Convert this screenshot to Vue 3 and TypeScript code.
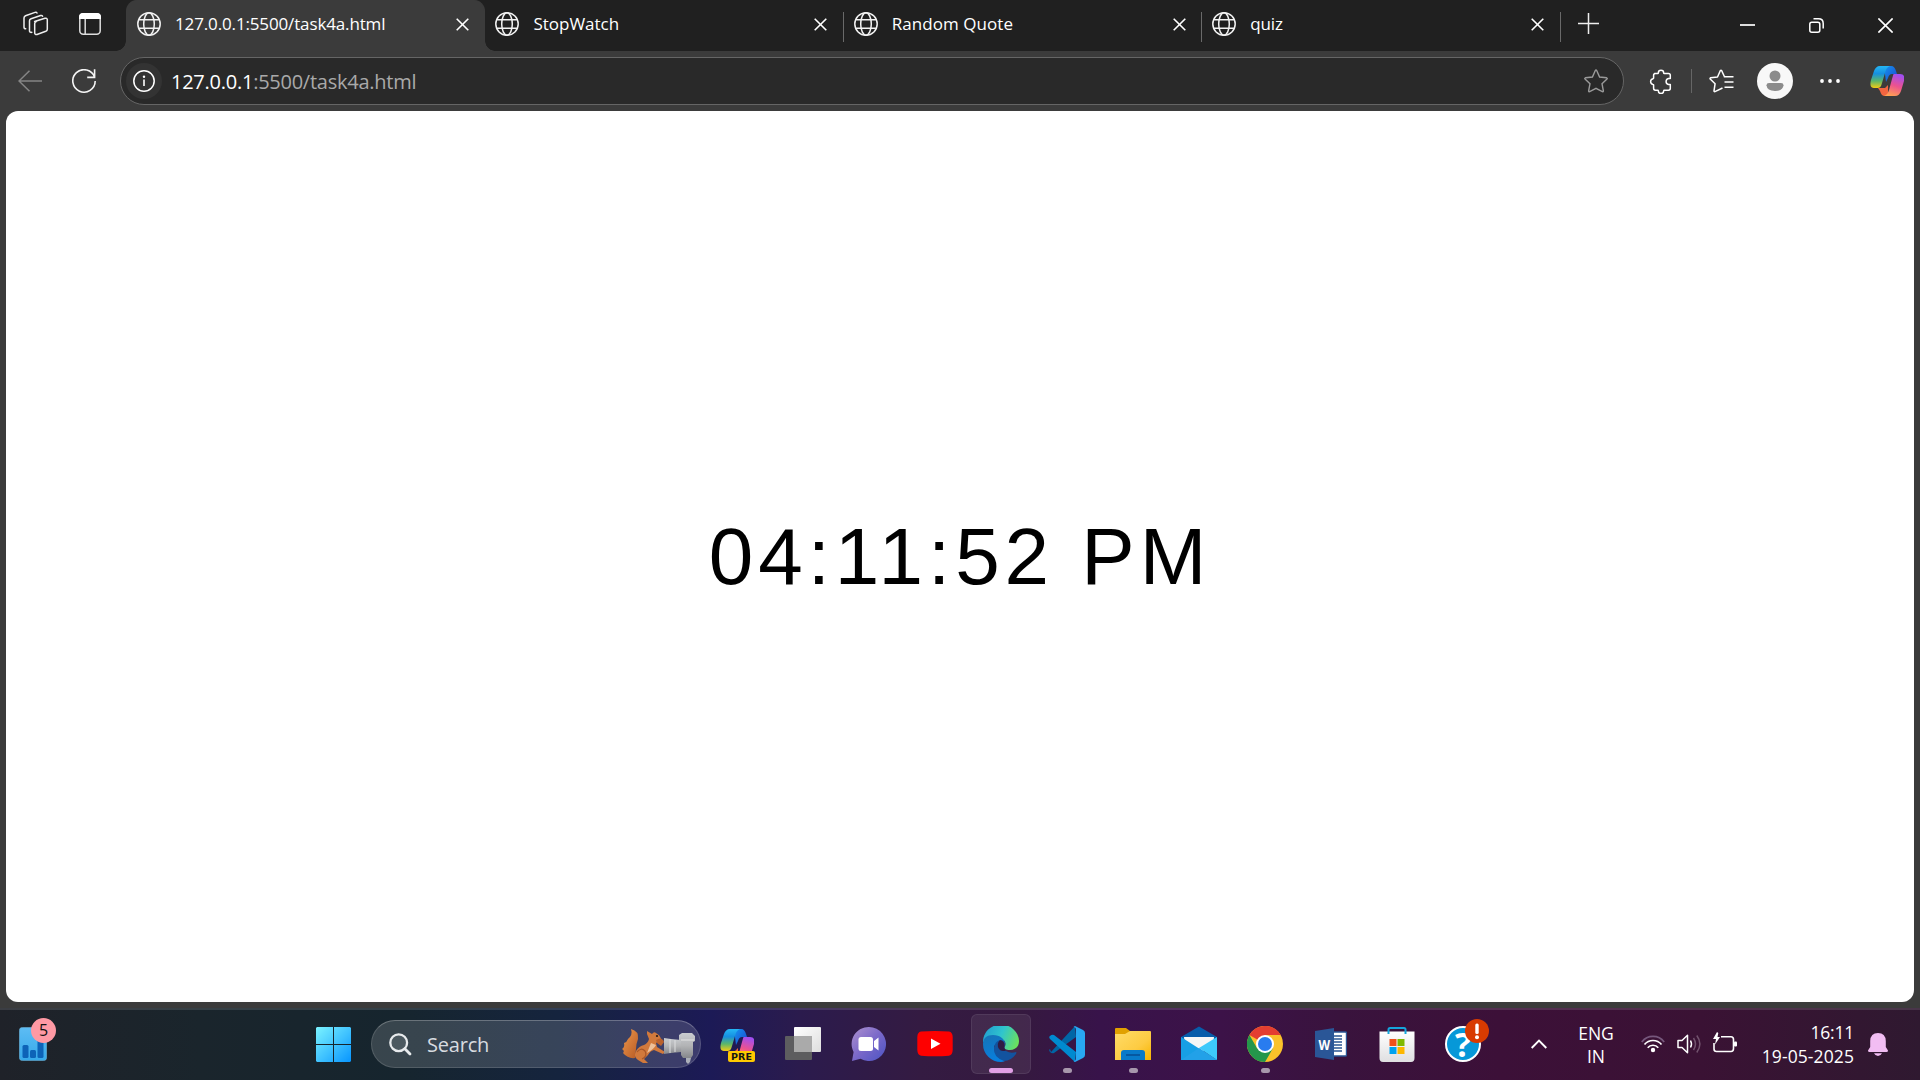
<script setup lang="ts">
interface Tab {
  title: string
  active: boolean
  spacing: number
}

interface TaskApp {
  id: string
  running?: boolean
  active?: boolean
}

const tabs: Tab[] = [
  { title: '127.0.0.1:5500/task4a.html', active: true, spacing: -0.14 },
  { title: 'StopWatch', active: false, spacing: 0 },
  { title: 'Random Quote', active: false, spacing: 0.05 },
  { title: 'quiz', active: false, spacing: -0.1 },
]

const apps: TaskApp[] = [
  { id: 'copilot' },
  { id: 'taskview' },
  { id: 'chat' },
  { id: 'youtube' },
  { id: 'edge', active: true },
  { id: 'vscode', running: true },
  { id: 'explorer', running: true },
  { id: 'mail' },
  { id: 'chrome', running: true },
  { id: 'word' },
  { id: 'store' },
  { id: 'help' },
]

const clock = '04:11:52 PM'
</script>

<template>
  <div class="screen">
    <svg class="defs" width="0" height="0">
      <defs>
        <linearGradient id="cpBlue" x1="0" y1="0" x2="0" y2="1">
          <stop offset="0" stop-color="#25b7f5" /><stop offset=".35" stop-color="#168fe0" />
          <stop offset=".68" stop-color="#5cb66a" /><stop offset="1" stop-color="#f3cc13" />
        </linearGradient>
        <linearGradient id="cpTop" x1="0" y1="0" x2="1" y2="1">
          <stop offset="0" stop-color="#1794ee" /><stop offset="1" stop-color="#1746cf" />
        </linearGradient>
        <linearGradient id="cpPink" x1=".6" y1="0" x2=".3" y2="1">
          <stop offset="0" stop-color="#a14ef0" /><stop offset=".5" stop-color="#ec528f" />
          <stop offset="1" stop-color="#ffa251" />
        </linearGradient>
        <symbol id="copilot" viewBox="0 0 34 32">
          <path d="M14 1h7c3 0 4 2 5 5l1 3h-5c-2 0-3 1-4 4l-2 4z" fill="url(#cpTop)" />
          <path d="M8 23h7l3-3 0 11h-3c-3 0-4-2-5-5z" fill="#f26540" />
          <path d="M10 1h10c-3 1-4 3-5 7l-3 10c-1 4-2 5-5 5H4c-4 0-4-4-3-8L4 6c1-3 3-5 6-5z" fill="url(#cpBlue)" />
          <path d="M24 9h6c4 0 5 3 4 7l-3 10c-1 3-3 5-6 5H14c3-1 4-3 5-6l3-11c1-3 1-5 2-5z" fill="url(#cpPink)" />
        </symbol>
      </defs>
    </svg>

    <header class="strip">
      <div class="strip-left">
        <svg class="workspaces" width="26" height="26" viewBox="0 0 26 26">
          <g fill="none" stroke="#eee" stroke-width="1.5" stroke-linejoin="round" stroke-linecap="round">
            <path d="M11.6 10.5 22 7.3q2-.6 2.300 1.300v9.600q0 1.500-1.500 2.100l-8.800 3.200q-2 .5-2.300-1.300V12.600q0-1.500 1.600-2.100z" />
            <path d="M6.500 19.800V9.800q0-1.500 1.600-2.100l9.500-3.200q1.500-.4 2 .7M8.800 21.300q-2 .4-2.300-1.300" />
            <path d="M2.700 17.800q-1.700 0-1.700-1.500V7q0-1.500 1.500-2.200L12 1.400q1.500-.4 2 .6" />
          </g>
        </svg>
        <svg class="tabactions" width="22" height="22" viewBox="0 0 22 22">
          <rect x=".8" y=".8" width="20.400" height="20.400" rx="3.500" fill="none" stroke="#ddd" stroke-width="1.500" />
          <path d="M0 6V4q0-4 4-4h14q4 0 4 4v2z" fill="#fff" />
          <path d="M6.200 6v15" stroke="#ddd" stroke-width="1.500" />
        </svg>
      </div>
      <div v-for="tab in tabs" :key="tab.title" class="tab" :class="{ active: tab.active }">
        <svg class="globe" width="24" height="24" viewBox="0 0 24 24" fill="none" stroke="#f2f2f2" stroke-width="1.500">
          <circle cx="12" cy="12" r="11.200" /><ellipse cx="12" cy="12" rx="5.300" ry="11.200" />
          <path d="M1.800 7.800h20.400M1.800 16.200h20.400" />
        </svg>
        <span class="title" :style="{ letterSpacing: tab.spacing + 'px' }">{{ tab.title }}</span>
        <svg class="close" width="13" height="13" viewBox="0 0 13 13">
          <path d="M.7.700l11.600 11.600M12.300.700.700 12.300" stroke="#fff" stroke-width="1.600" />
        </svg>
      </div>
      <svg class="plus" width="21" height="21" viewBox="0 0 21 21"><path d="M10.500 0v21M0 10.500h21" stroke="#eee" stroke-width="1.500" /></svg>
      <div class="controls">
        <svg width="15" height="15" viewBox="0 0 15 15"><path d="M0 7h15" stroke="#fff" stroke-width="1.700" /></svg>
        <svg width="15" height="15" viewBox="0 0 15 15" fill="none" stroke="#fff" stroke-width="1.500">
          <rect x=".8" y="4.200" width="10" height="10" rx="2" /><path d="M4.500.800H9.500Q14.200.800 14.200 5.500V10.500" />
        </svg>
        <svg width="15" height="15" viewBox="0 0 15 15"><path d="M.4.400l14.200 14.200M14.600.400.400 14.600" stroke="#fff" stroke-width="1.600" /></svg>
      </div>
    </header>

    <div class="toolbar">
      <svg class="back" width="24" height="22" viewBox="0 0 24 22"><path d="M24 11H1M11.500.700 1 11l10.500 10.300" fill="none" stroke="#858585" stroke-width="1.500" /></svg>
      <svg class="reload" width="24" height="24" viewBox="0 0 24 24" fill="none" stroke="#f4f4f4" stroke-width="1.600">
        <path d="M22.600 8.300A11.200 11.200 0 1 0 23.200 12M22.600.200V8.400H15.200" />
      </svg>
      <div class="address">
        <div class="info">
          <svg width="22" height="22" viewBox="0 0 22 22"><circle cx="11" cy="11" r="10.200" fill="none" stroke="#fff" stroke-width="1.500" /><path d="M11 9.500V16" stroke="#fff" stroke-width="1.600" /><circle cx="11" cy="6.700" r="1.200" fill="#fff" /></svg>
        </div>
        <span class="url"><b>127.0.0.1</b>:5500/task4a.html</span>
        <svg class="star" width="24" height="24" viewBox="0 0 24 24"><path d="M12 1Q12.400 1 12.700 1.500L15.600 8 22.600 8.800Q23.600 9.200 23 9.900L18 14.700 19.400 22Q19.300 23 18.300 22.700L12 19.300 5.700 22.700Q4.700 23 4.600 22L6 14.700 1 9.900Q.4 9.200 1.400 8.800L8.400 8 11.300 1.500Q11.600 1 12 1z" fill="none" stroke="#9a9a9a" stroke-width="1.400" /></svg>
      </div>
      <svg class="puzzle" width="24" height="25" viewBox="0 0 24 25"><path d="M5.500 4.500H8.800Q9.300 4.500 9.300 3.900A2.700 2.700 0 0 1 14.700 3.900Q14.700 4.500 15.300 4.500H19.500Q21.300 4.500 21.300 6.300V9.400H19.500A3.200 3.200 0 0 0 19.500 15.600H21.300V19.300Q21.300 21.200 19.500 21.200H15.200Q14.700 21.200 14.700 21.800A2.700 2.700 0 0 1 9.300 21.800Q9.300 21.200 8.700 21.200H6.400Q4.600 21.200 4.600 19.300V16Q4.600 15.400 4 15.400A2.900 2.900 0 0 1 4 9.700Q4.600 9.700 4.600 9.100V6.300Q4.600 4.500 6.400 4.500z" fill="none" stroke="#fff" stroke-width="1.500" stroke-linejoin="round" /></svg>
      <i class="divider"></i>
      <svg class="favs" width="25" height="24" viewBox="0 0 25 24" fill="none" stroke="#fff" stroke-width="1.500" stroke-linejoin="round"><path d="M13.500 19 6 22.600Q4.900 22.800 5 21.800L6.100 14.700 1.200 10Q.7 9.200 1.700 8.800L8.500 8 11.400 1.500Q12 .8 12.600 1.500L15.500 7.800M14.800 7.800H24.500M15.500 13H24.500M15.500 18.200H24.500" /></svg>
      <svg class="avatar" width="36" height="36" viewBox="0 0 36 36"><circle cx="18" cy="18" r="18" fill="#f8f8f8" /><circle cx="18" cy="13" r="5.500" fill="#8b8b8b" /><path d="M12 20H24Q26.500 20 26.500 22.300 26 28 18 28 10 28 9.500 22.300 9.500 20 12 20z" fill="#8b8b8b" /></svg>
      <svg class="more" width="20" height="4" viewBox="0 0 20 4" fill="#fff"><circle cx="2" cy="2" r="1.900" /><circle cx="10" cy="2" r="1.900" /><circle cx="18" cy="2" r="1.900" /></svg>
      <svg class="cp" width="34" height="32"><use href="#copilot" /></svg>
    </div>

    <main class="viewport"><div class="clock">{{ clock }}</div></main>

    <footer class="taskbar">
      <div class="widgets">
        <svg width="28" height="34" viewBox="0 0 28 34">
          <defs><linearGradient id="wg" x1="0" y1="0" x2="0" y2="1"><stop offset="0" stop-color="#5dbcf4" /><stop offset="1" stop-color="#36a9ea" /></linearGradient></defs>
          <rect x=".4" y=".4" width="27.200" height="33.200" rx="3" fill="url(#wg)" stroke="#6eb5da" stroke-width=".6" />
          <g fill="#0d63b8"><rect x="3.500" y="18" width="6" height="13" rx="1.500" /><rect x="11" y="23" width="6" height="8" rx="1.500" /><rect x="18.500" y="13" width="6" height="18" rx="1.500" /></g>
        </svg>
        <span class="count">5</span>
      </div>
      <svg class="start" width="35" height="35" viewBox="0 0 35 35">
        <defs><linearGradient id="st" gradientUnits="userSpaceOnUse" x1="0" y1="0" x2="35" y2="35"><stop offset="0" stop-color="#7bf3ff" /><stop offset=".5" stop-color="#43c5ff" /><stop offset="1" stop-color="#0795ff" /></linearGradient></defs>
        <path d="M1 0H17V17H0V1zM18 0H34L35 1V17H18zM0 18H17V35H1L0 34zM18 18H35V34L34 35H18z" fill="url(#st)" />
      </svg>
      <div class="search">
        <svg class="lens" width="23" height="23" viewBox="0 0 23 23" fill="none" stroke="#e8ebed"><circle cx="9.700" cy="9.700" r="8.400" fill="#7c87904d" stroke-width="2.300" /><path d="M15.800 15.800 21 21" stroke-width="2.800" stroke-linecap="round" /></svg>
        <span class="search-text">Search</span>
        <svg class="squirrel" width="74" height="36" viewBox="0 0 74 36">
          <defs>
            <linearGradient id="fur" x1="0" y1="0" x2="1" y2="1"><stop offset="0" stop-color="#f09a4c" /><stop offset="1" stop-color="#b65a25" /></linearGradient>
            <linearGradient id="cam" x1="0" y1="0" x2="0" y2="1"><stop offset="0" stop-color="#c9ccd0" /><stop offset=".5" stop-color="#b3b4b6" /><stop offset="1" stop-color="#85878c" /></linearGradient>
          </defs>
          <path d="M9 1Q17 3 16 11 14 16 14 21L13 30Q6 31 1 25 3 23 0 21 3 19 2 15 5 14 6 11 11 7 9 1z" fill="url(#fur)" />
          <path d="M25 3 30 6Q32 3 34 5 38 7 39 11 36 14 34 15L35 19 43 24 41 26 32 22Q28 23 26 27L22 31 26 35H21L16 32Q11 29 14 23 17 18 22 17 26 15 27 11L25 6z" fill="#d1793c" />
          <path d="M29 15 34 17Q32 21 25 25 27 20 29 15z" fill="#edc09a" /><path d="M34 12Q40 8 42 14L39 18 35 15z" fill="#b9612d" />
          <path d="M15 24Q19 19 23 23 26 28 20 31" stroke="#a75628" stroke-width="1.200" fill="none" />
          <circle cx="35" cy="8" r="1.100" fill="#241a18" />
          <path d="M42 10 49 11 59 12V24L49 25 42 26z" fill="url(#cam)" /><path d="M48 11V25M53 12V24" stroke="#dedfe0" />
          <path d="M57 7 60 5H70L73 8V13L71 14V27L69 30H61L59 27V13L57 12z" fill="url(#cam)" /><path d="M59 12H72" stroke="#e4e4e4" /><path d="M64 30H69L68 34 66 36 64 34z" fill="#aaaeb8" />
        </svg>
      </div>

      <div class="apps">
        <div v-for="app in apps" :key="app.id" class="app" :class="{ current: app.active, running: app.running }">
          <div v-if="app.id === 'copilot'" class="copilot-app">
            <svg width="34" height="32"><use href="#copilot" /></svg><span class="pre">PRE</span>
          </div>
          <svg v-else-if="app.id === 'taskview'" width="36" height="36" viewBox="0 0 36 36">
            <defs><linearGradient id="tv" x1="0" y1="0" x2="1" y2="1"><stop offset="0" stop-color="#fff" /><stop offset="1" stop-color="#dedede" /></linearGradient></defs>
            <rect x="0" y="10" width="27" height="24" rx="1" fill="#5d5d5f" /><rect x="9" y="1" width="27" height="25" rx="1" fill="url(#tv)" /><path d="M9 10H27V26H9z" fill="#aaa" />
          </svg>
          <svg v-else-if="app.id === 'chat'" width="36" height="36" viewBox="0 0 36 36">
            <defs><linearGradient id="ch" x1="0" y1="0" x2="1" y2="1"><stop offset="0" stop-color="#ae92cf" /><stop offset=".5" stop-color="#7a68c9" /><stop offset="1" stop-color="#4b54c4" /></linearGradient></defs>
            <path d="M18 1A17 17 0 1 1 9.500 32.700L1 35 2.600 26A17 17 0 0 1 18 1z" fill="url(#ch)" /><rect x="7.500" y="11" width="14.500" height="14" rx="2.500" fill="#fff" /><path d="M23 15 27.500 11.500V24.500L23 21z" fill="#fff" />
          </svg>
          <svg v-else-if="app.id === 'youtube'" width="36" height="36" viewBox="0 0 36 36"><path d="M4 5.500Q18 4.500 32 5.500 35.500 6 35.700 11V24Q35.500 29 32 29.700 18 30.700 4 29.700.5 29 .3 24V11Q.5 6 4 5.500z" fill="#fe0000" /><path d="M14 12.500 23.500 17.700 14 23z" fill="#fff" /></svg>
          <svg v-else-if="app.id === 'edge'" width="36" height="36" viewBox="0 0 36 36">
            <defs>
              <linearGradient id="eg" x1="0" y1=".3" x2="1" y2=".6"><stop offset="0" stop-color="#219fd0" /><stop offset=".5" stop-color="#30c5cd" /><stop offset="1" stop-color="#6be15d" /></linearGradient>
              <linearGradient id="eb" x1="0" y1="0" x2=".3" y2="1"><stop offset="0" stop-color="#1773b4" /><stop offset="1" stop-color="#087fdd" /></linearGradient>
            </defs>
            <path d="M0 16A18 17 0 0 1 36 15C36 21 32 24 27 24 22 24 21 22 21.500 21 24 18 22 13 17 13Z" fill="url(#eg)" />
            <path d="M0 18C0 12 4 9 10 9 17 9 22 13 22 18L17 15 11 20Q11 30 22 35 20 36 18 36A18 18 0 0 1 0 18z" fill="url(#eb)" />
            <path d="M17 14Q22 14 22 19 20 22 23 25 28 28 33 26 34 26 33 28 28 35 21 35 10 31 11 22 12 15 17 14z" fill="#12539f" />
            <path d="M17 14Q22 15 21.500 20 20.500 22 23 24.500 18 26 16 23 13 18 17 14z" fill="#301b43" />
          </svg>
          <svg v-else-if="app.id === 'vscode'" width="36" height="36" viewBox="0 0 36 36"><path d="M2 26 26 0 27 11 5 27Q3 28 1 26-.5 24 1 23z" fill="#0066a6" /><path d="M1 10Q3 8 5 9L27 26 26 36 1 13Q-.5 11 1 10z" fill="#008ad0" /><path d="M26 0 34 4Q36 5 36 7V29Q36 31 34 32L26 36 24.500 35Q27 35 27 32V4Q27 1 24.500 1z" fill="#28a8f2" /></svg>
          <svg v-else-if="app.id === 'explorer'" width="36" height="36" viewBox="0 0 36 36">
            <defs><linearGradient id="fo" x1="0" y1="0" x2="1" y2="1"><stop offset="0" stop-color="#ffdc68" /><stop offset=".6" stop-color="#fdcb42" /><stop offset="1" stop-color="#f7b400" /></linearGradient></defs>
            <path d="M0 3Q0 2 1 2H11L15 5 14 10H0z" fill="#e1a100" /><path d="M0 8H10L15 5H35Q36 5 36 6V34H0z" fill="url(#fo)" /><path d="M6 34V27Q6 24 9 24H27Q30 24 30 27V34z" fill="#087ac9" /><path d="M11 29H25" stroke="#07559b" stroke-width="1.800" />
          </svg>
          <svg v-else-if="app.id === 'mail'" width="36" height="36" viewBox="0 0 36 36"><path d="M18 .5 36 11V22H0V11z" fill="#075caa" /><path d="M3 11H33L32 21 18 27 4 21z" fill="#f6f6f6" /><path d="M0 11 36 34H0z" fill="#179fe5" /><path d="M36 11V34L18 22z" fill="#3dc9fb" /><path d="M18 22 36 34H0z" fill="#22a1e8" /></svg>
          <svg v-else-if="app.id === 'chrome'" width="36" height="36" viewBox="0 0 36 36"><circle cx="18" cy="18" r="18" fill="#fac22a" /><path d="M18 18 2.400 9A18 18 0 0 1 33.600 9z" fill="#e43e31" /><path d="M18 9H33.600L25 18z" fill="#fac22a" /><path d="M2.400 9 10.200 22.500 25.800 22.500 18 36A18 18 0 0 1 2.400 9z" fill="#24964b" /><circle cx="18" cy="18" r="9" fill="#fff" /><circle cx="18" cy="18" r="7" fill="#297cef" /></svg>
          <div v-else-if="app.id === 'word'" class="word-app">
            <svg width="32" height="32" viewBox="0 0 32 32"><rect x="18" y="4" width="13.500" height="24" rx="1" fill="#fff" stroke="#2a5594" stroke-width="1.400" /><path d="M19 8H27M19 11H27M19 14H27M19 17H27M19 20H27M19 23H27" stroke="#2a5594" stroke-width="1.400" /><path d="M0 3 19 0V32L0 29z" fill="#2a5697" /></svg><span>W</span>
          </div>
          <svg v-else-if="app.id === 'store'" width="36" height="36" viewBox="0 0 36 36">
            <defs><linearGradient id="so" x1="0" y1="0" x2="0" y2="1"><stop offset="0" stop-color="#fff" /><stop offset="1" stop-color="#dfdfe1" /></linearGradient></defs>
            <path d="M.5 5.500H35.500V32Q35.500 36 32 36H4Q.5 36 .5 32z" fill="url(#so)" /><path d="M9.500 8V3.500Q9.500 2 11 2H25Q26.500 2 26.500 3.500V8" fill="none" stroke="#15a5dc" stroke-width="2" /><path d="M10.500 13H17.500V20H10.500z" fill="#f1511b" /><path d="M18.500 13H25.500V20H18.500z" fill="#80b900" /><path d="M10.500 21H17.500V28H10.500z" fill="#00a2ee" /><path d="M18.500 21H25.500V28H18.500z" fill="#fdb700" />
          </svg>
          <div v-else class="help-app"><span class="q">?</span>
            <svg class="alert" width="24" height="24" viewBox="0 0 24 24"><circle cx="12" cy="12" r="12" fill="#d83b01" /><rect x="10.300" y="4.500" width="3.400" height="10.500" rx="1.500" fill="#fff" /><circle cx="12" cy="18.200" r="2" fill="#fff" /></svg>
          </div>
        </div>
      </div>

      <div class="tray">
        <svg class="chev" width="16" height="10" viewBox="0 0 16 10"><path d="M.7 9 8 1.500 15.300 9" fill="none" stroke="#fff" stroke-width="1.900" /></svg>
        <div class="lang"><span>ENG</span><span>IN</span></div>
        <svg class="wifi" width="24" height="19" viewBox="0 0 24 19" fill="none" stroke="#fff" stroke-width="1.700"><path d="M.8 8A14 14 0 0 1 23.200 8" stroke="#76577c" /><path d="M3.500 10.500A11 11 0 0 1 20.500 10.500M6.700 13.700A7 7 0 0 1 17.300 13.700" /><circle cx="12" cy="16" r="2.200" fill="#fff" stroke="none" /></svg>
        <svg class="vol" width="24" height="20" viewBox="0 0 24 20" fill="none" stroke="#fff" stroke-width="1.500" stroke-linejoin="round"><path d="M1 6.500H5L10.500 1.300V18.700L5 13.500H1z" /><path d="M13.500 6.500Q15.500 10 13.500 13.500" /><path d="M16.500 4Q20.500 10 16.500 16M19.800 1.500Q26 10 19.800 18.500" stroke="#72536e" /></svg>
        <svg class="batt" width="24" height="21" viewBox="0 0 24 21"><path d="M8 4.700H18Q20.500 4.700 20.500 7.500V16.500Q20.500 19.500 18 19.500H3.500Q1 19.500 1 17V11" fill="none" stroke="#fff" stroke-width="1.600" /><rect x="21" y="9.500" width="3" height="5" rx="1" fill="#fff" /><path d="M4 0 0 7H3L2 12.500 7 5H4.500L5.300 1z" fill="#fff" /></svg>
        <div class="datetime"><span class="time">16:11</span><span>19-05-2025</span></div>
        <svg class="bell" width="20" height="23" viewBox="0 0 20 23"><path d="M10 0Q17.500 0 17.800 8V14L20 17.500Q20 19 18.500 19H1.500Q0 19 0 17.500L2.200 14V8Q2.500 0 10 0zM6 20.300H14Q12.700 23 10 23 7.300 23 6 20.300z" fill="#f2bdf3" /></svg>
      </div>
    </footer>
  </div>
</template>

<style>
html, body { margin: 0; background: #3b3b3b; }
</style>

<style scoped>
* { box-sizing: border-box; }
.screen { width: 1920px; height: 1080px; overflow: hidden; display: flex; flex-direction: column; background: #3b3b3b; font-family: "Open Sans", "Noto Sans", sans-serif; color: #fff; }
.defs { position: absolute; }
svg { display: block; flex: none; }

.strip { height: 51px; background: #202020; display: flex; flex: none; }
.strip-left { width: 126px; display: flex; flex: none; padding-top: 11px; }
.workspaces { margin-left: 23px; }
.tabactions { margin: 2px 0 0 30px; }
.tab { position: relative; width: 358.400px; height: 51px; flex: none; display: flex; padding: 12px 0 0 11px; }
.tab:not(.active)::after { content: ""; position: absolute; right: -1px; top: 12px; width: 1px; height: 30px; background: #696969; }
.tab.active { background: #3b3b3b; border-radius: 11px 11px 0 0; box-shadow: 1px 0 0 #3b3b3b; }
.tab.active::before, .tab.active::after { content: ""; position: absolute; bottom: 0; width: 10px; height: 10px; }
.tab.active::before { left: -10px; background: radial-gradient(circle at 0 0, #202020 9.500px, #3b3b3b 10px); }
.tab.active::after { right: -11px; background: radial-gradient(circle at 100% 0, #202020 9.500px, #3b3b3b 10px); }
.title { margin-left: 14px; width: 276px; font-size: 17px; line-height: 24px; white-space: nowrap; }
.close { margin: 6px 0 0 5px; }
.plus { margin: 13px 0 0 18px; }
.controls { display: flex; gap: 54px; margin: 18px 27px 0 auto; }

.toolbar { height: 60px; flex: none; display: flex; align-items: center; }
.back { margin-left: 18px; }
.reload { margin-left: 30px; }
.address { margin-left: 24px; width: 1504px; height: 48px; border: 1.500px solid #656565; border-radius: 24px; background: #292929; display: flex; align-items: center; padding-left: 5px; }
.info { width: 36px; height: 36px; border-radius: 50%; background: #333; display: grid; place-items: center; flex: none; }
.url { margin: 1px 0 0 9px; width: 1413px; font-size: 20px; line-height: 28px; letter-spacing: -.25px; color: #a9a9a9; white-space: nowrap; }
.url b { font-weight: 400; color: #fff; }
.puzzle { margin-left: 25px; }
.divider { width: 1px; height: 24px; background: #666; margin-left: 18px; }
.favs { margin-left: 17px; }
.avatar { margin-left: 23px; }
.more { margin-left: 27px; }
.cp { margin-left: 30px; }

.viewport { height: 891px; flex: none; margin: 0 6px; background: #fff; border-radius: 12px; display: flex; justify-content: center; padding-top: 403px; }
.clock { font-family: "Liberation Sans", Arial, sans-serif; font-size: 80px; line-height: 86px; letter-spacing: 5px; color: #000; white-space: nowrap; }

.taskbar { height: 72px; margin-top: 6px; border-top: 2px solid #ffffff20; flex: none; display: flex; background: linear-gradient(90deg, #1f2229 0, #1a252c 200px, #16252e 400px, #15243e 560px, #1c1a56 710px, #2b1b4d 800px, #341b42 920px, #35193f 1020px, #38134a 1100px, #3c1248 1220px, #39133d 1340px, #3c1038 1500px, #3a1234 1700px, #2f1930 1920px) border-box; }
.widgets { position: relative; margin: 17px 0 0 19px; width: 28px; height: 34px; }
.count { position: absolute; left: 12px; top: -9px; width: 25px; height: 25px; border-radius: 50%; background: #ff99a4; color: #111; font-size: 16px; line-height: 25px; text-align: center; }
.start { margin: 17px 0 0 269px; }
.search { width: 330px; height: 48px; margin: 10px 0 0 20px; border-radius: 24px; border: 1.500px solid #ffffff22; border-top-color: #ffffff40; background: #ffffff26; display: flex; padding-left: 17px; flex: none; }
.lens { margin-top: 12px; }
.search-text { margin: 10px 0 0 15px; width: 195px; font-size: 20px; line-height: 28px; letter-spacing: -.2px; color: #d8dce0; }
.squirrel { margin-top: 7px; }
.apps { display: flex; gap: 6px; margin: 4px 0 0 6px; }
.app { position: relative; width: 60px; height: 60px; display: flex; justify-content: center; padding-top: 12px; border-radius: 6px; flex: none; }
.app.current { background: #ffffff12; border: 1px solid #ffffff14; padding-top: 11px; }
.app.current::after, .app.running::after { content: ""; position: absolute; bottom: 1px; width: 9px; height: 5px; border-radius: 3px; background: #a797ac; }
.app.current::after { bottom: 0; width: 24px; background: #e2a0e6; }
.copilot-app, .word-app, .help-app { position: relative; width: 34px; height: 36px; }
.copilot-app { padding-top: 2px; }
.pre { position: absolute; left: 8px; top: 25px; width: 27px; height: 11px; border-radius: 2px; background: #ffc900; color: #151515; font: 700 9.500px/11px "DejaVu Sans", sans-serif; text-align: center; }
.word-app { width: 32px; padding-top: 2px; }
.word-app span { position: absolute; left: 2px; top: 9px; width: 14px; font: 700 15px/18px "Open Sans", sans-serif; transform: scaleX(.8); }
.help-app { width: 36px; border-radius: 50%; border: 2px solid #fff; background: #0698d8; text-align: center; }
.q { font: 700 34px/32px "Open Sans", sans-serif; }
.alert { position: absolute; left: 18px; top: -9px; }

.tray { display: flex; font-size: 17.500px; line-height: 24px; }
.chev { margin: 29px 0 0 38px; }
.lang { width: 40px; margin: 12px 0 0 29px; display: flex; flex-direction: column; align-items: center; line-height: 23px; letter-spacing: -.1px; }
.wifi { margin: 24px 0 0 25px; }
.vol { margin: 24px 0 0 12px; }
.batt { margin: 22px 0 0 12px; }
.datetime { width: 100px; margin: 10px 0 0 17px; display: flex; flex-direction: column; align-items: flex-end; letter-spacing: .1px; white-space: nowrap; }
.time { letter-spacing: -.2px; }
.bell { margin: 23px 0 0 14px; }
</style>
